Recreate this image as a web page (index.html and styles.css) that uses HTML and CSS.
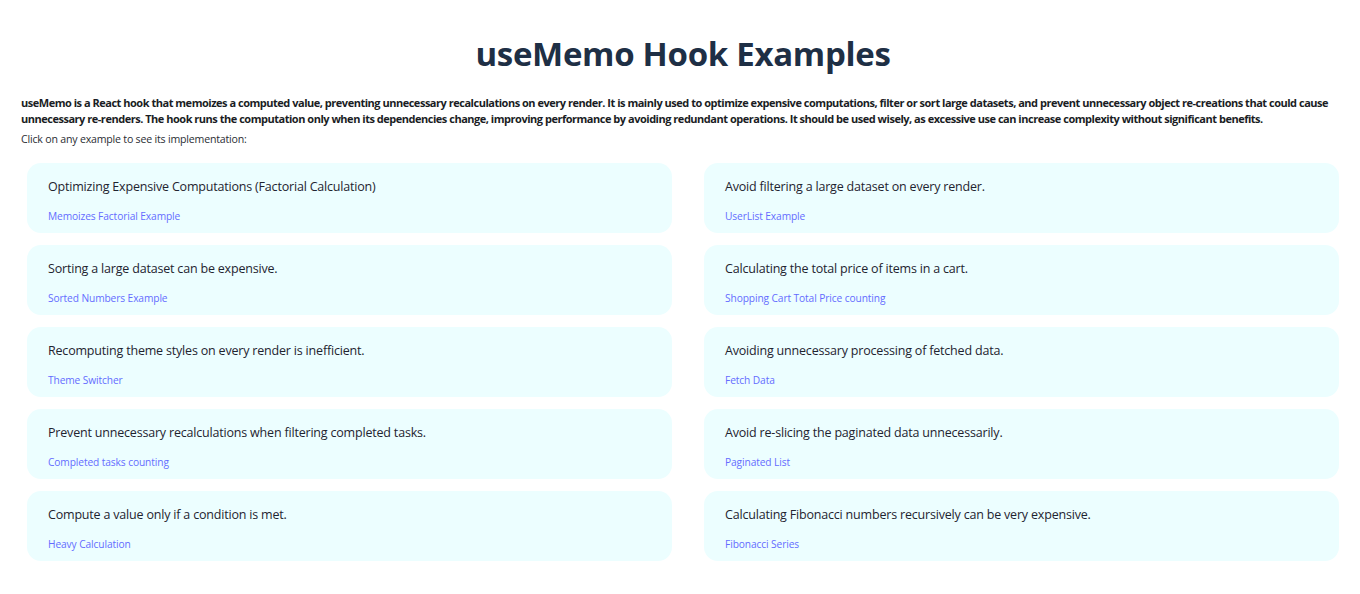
FILE: index.html
```html
<!DOCTYPE html>
<html lang="en">
<head>
<meta charset="utf-8">
<title>useMemo Hook Examples</title>
<link rel="stylesheet" href="styles.css">
</head>
<body>
<main class="page">
  <h1 class="title">useMemo Hook Examples</h1>
  <p class="intro">useMemo is a React hook that memoizes a computed value, preventing unnecessary recalculations on every render. It is mainly used to optimize expensive computations, filter or sort large datasets, and prevent unnecessary object re-creations that could cause unnecessary re-renders. The hook runs the computation only when its dependencies change, improving performance by avoiding redundant operations. It should be used wisely, as excessive use can increase complexity without significant benefits.</p>
  <p class="hint">Click on any example to see its implementation:</p>
  <div class="grid">
    <div class="card"><p class="card-text">Optimizing Expensive Computations (Factorial Calculation)</p><a class="card-link" href="#">Memoizes Factorial Example</a></div>
    <div class="card"><p class="card-text">Avoid filtering a large dataset on every render.</p><a class="card-link" href="#">UserList Example</a></div>
    <div class="card"><p class="card-text">Sorting a large dataset can be expensive.</p><a class="card-link" href="#">Sorted Numbers Example</a></div>
    <div class="card"><p class="card-text">Calculating the total price of items in a cart.</p><a class="card-link" href="#">Shopping Cart Total Price counting</a></div>
    <div class="card"><p class="card-text">Recomputing theme styles on every render is inefficient.</p><a class="card-link" href="#">Theme Switcher</a></div>
    <div class="card"><p class="card-text">Avoiding unnecessary processing of fetched data.</p><a class="card-link" href="#">Fetch Data</a></div>
    <div class="card"><p class="card-text">Prevent unnecessary recalculations when filtering completed tasks.</p><a class="card-link" href="#">Completed tasks counting</a></div>
    <div class="card"><p class="card-text">Avoid re-slicing the paginated data unnecessarily.</p><a class="card-link" href="#">Paginated List</a></div>
    <div class="card"><p class="card-text">Compute a value only if a condition is met.</p><a class="card-link" href="#">Heavy Calculation</a></div>
    <div class="card"><p class="card-text">Calculating Fibonacci numbers recursively can be very expensive.</p><a class="card-link" href="#">Fibonacci Series</a></div>
  </div>
</main>
</body>
</html>
```
FILE: styles.css
```css
* { box-sizing: border-box; }
html, body { margin: 0; padding: 0; background: #ffffff; }
body {
  font-family: "Open Sans", "Noto Sans", sans-serif;
  color: #1f2430;
}
.page {
  margin: 0 15px 0 21px;
  padding-top: 30px;
}
.title {
  margin: 0;
  text-align: center;
  font-size: 33px;
  line-height: 48px;
  font-weight: 700;
  color: #1e2f45;
  letter-spacing: -0.3px;
}
.intro {
  margin: 17px 0 0;
  font-size: 11px;
  line-height: 16px;
  font-weight: 700;
  color: #1a1d24;
  letter-spacing: -0.48px;
}
.hint {
  margin: 4px 0 0;
  font-size: 10.6px;
  line-height: 16px;
  color: #2a2d33;
  letter-spacing: -0.2px;
}
.grid {
  display: grid;
  grid-template-columns: 645px 635px;
  column-gap: 32px;
  row-gap: 12px;
  margin: 16px 6px 0;
}
.card {
  height: 70px;
  background: #ecfeff;
  border-radius: 14px;
  padding: 15px 21px 0;
}
.card-text {
  margin: 0;
  font-size: 12.5px;
  line-height: 18px;
  color: #1f2430;
  letter-spacing: -0.19px;
}
.card-link {
  display: block;
  margin-top: 13px;
  font-size: 10.2px;
  line-height: 14px;
  color: #646cff;
  text-decoration: none;
  letter-spacing: -0.1px;
}
```
